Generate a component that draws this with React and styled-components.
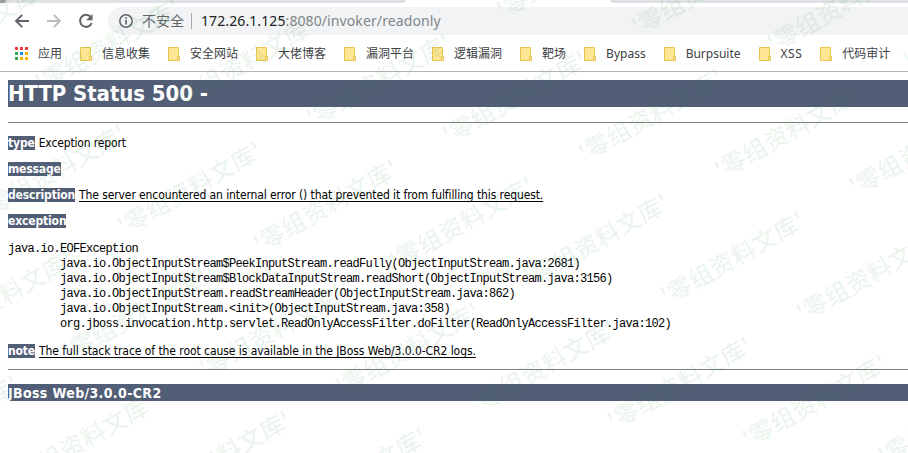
import React from "react";
import styled, { createGlobalStyle, css } from "styled-components";

const uiFont = `"Noto Sans", "Noto Sans CJK SC", sans-serif`;
const pageFont = `"DejaVu Sans Condensed", "DejaVu Sans", "Liberation Sans", sans-serif`;
const slate = "#525d76";

const GlobalStyle = createGlobalStyle`
  * { box-sizing: border-box; }
  body { margin: 0; background: #fff; overflow: hidden; }
`;

const Window = styled.div`
  position: relative;
  display: flex;
  flex-direction: column;
  width: 908px;
  height: 453px;
  overflow: hidden;
  background: #fff;
`;

const TabStrip = styled.div`
  display: flex;
  justify-content: space-between;
  height: 3px;
`;

const TabEdge = styled.div`
  width: ${(p) => p.$width}px;
  background: #dee1e6;
  border-radius: ${(p) => (p.$side === "left" ? "0 0 5px 0" : "0 0 0 5px")};
`;

const TabBadge = styled.div`
  width: 6px;
  height: 3px;
  background: #a09ca3;
  border-radius: 0 0 6px 0;
`;

const Toolbar = styled.div`
  display: flex;
  align-items: center;
  height: 36px;
`;

const NavButtons = styled.div`
  display: flex;
  align-items: center;
  width: 108px;
  padding-left: 14px;
  gap: 16px;
  svg { display: block; }
`;

const AddressBar = styled.div`
  display: flex;
  align-items: center;
  flex: 1;
  height: 28px;
  padding-left: 11px;
  border-radius: 14px 0 0 14px;
  background: #f1f3f4;
  font: 14px/28px ${uiFont};
  color: #5f6368;
  white-space: nowrap;
`;

const Security = styled.span`
  margin-left: 9px;
`;

const Separator = styled.span`
  width: 1px;
  height: 16px;
  margin: 0 9px 0 7px;
  background: #a5a8ac;
`;

const Url = styled.span`
  color: #80868b;
  letter-spacing: 0.1px;
`;

const Host = styled.span`
  color: #202124;
`;

const Bookmarks = styled.div`
  display: flex;
  align-items: center;
  gap: 18px;
  height: 33px;
  padding: 0 0 3px 15px;
  border-bottom: 1px solid #b3b4b3;
`;

const Bookmark = styled.div`
  display: flex;
  align-items: center;
  gap: 10px;
  font: 12px/18px ${uiFont};
  color: #3c4043;
  letter-spacing: ${(p) => p.$spacing || 0}px;
  white-space: nowrap;
  svg { display: block; flex: none; }
`;

const Content = styled.main`
  display: flex;
  flex-direction: column;
  padding: 8px 0 0 8px;
  font: 12px/14px ${pageFont};
  color: #000;
`;

const Title = styled.h1`
  height: 27px;
  margin: 0 0 15px;
  background: ${slate};
  color: #fff;
  font: bold 22px/28px ${pageFont};
  letter-spacing: -0.08px;
`;

const Rule = styled.div`
  height: 1px;
  margin-top: ${(p) => p.$gap || 0}px;
  background: #7f817f;
`;

const Fields = styled.div`
  display: flex;
  flex-direction: column;
  gap: 12px;
  padding-top: 13px;
`;

const Field = styled.div`
  display: flex;
  gap: 4px;
  height: 14px;
  white-space: nowrap;
`;

const Label = styled.b`
  background: ${slate};
  color: #fff;
  letter-spacing: -0.14px;
`;

const Value = styled.span`
  letter-spacing: ${(p) => p.$spacing || 0}px;
  ${(p) =>
    p.$underlined &&
    css`
      text-decoration: underline;
      text-underline-offset: 2px;
      text-decoration-skip-ink: none;
      text-decoration-thickness: 1px;
    `}
`;

const Trace = styled.pre`
  margin: 14px 0 12px;
  font: 12px/15px "Liberation Mono", monospace;
  letter-spacing: -0.7px;
  tab-size: 8;
`;

const Footer = styled.h3`
  height: 17px;
  margin: 14px 0 0;
  background: ${slate};
  color: #fff;
  font: bold 14px/18px ${pageFont};
  letter-spacing: 0.36px;
`;

const WatermarkLayer = styled.div`
  position: absolute;
  inset: 0;
  pointer-events: none;
  overflow: hidden;
`;

const Watermark = styled.span`
  position: absolute;
  transform: translate(0, -50%) rotate(-29.5deg);
  transform-origin: 0 50%;
  font: 500 24px/24px "Noto Sans CJK SC", sans-serif;
  letter-spacing: 0.4px;
  color: rgba(50, 145, 70, 0.1);
  white-space: nowrap;
`;

const BackIcon = () => (
  <svg width="16" height="16" viewBox="0 0 16 16" fill="none" stroke="#5f6368" strokeWidth="1.9">
    <path d="M15 8H2.200M8.200 1.800L2 8l6.200 6.200" />
  </svg>
);

const ForwardIcon = () => (
  <svg width="16" height="16" viewBox="0 0 16 16" fill="none" stroke="#babcbe" strokeWidth="1.9">
    <path d="M1 8h12.800M7.800 1.800L14 8l-6.200 6.200" />
  </svg>
);

const ReloadIcon = () => (
  <svg width="16" height="16" viewBox="0 0 16 16" fill="none" stroke="#5f6368" strokeWidth="2">
    <path d="M12.700 4A6 6 0 1 0 13.700 10" />
    <path d="M14.500 1v6.300H8.200z" fill="#5f6368" stroke="none" />
  </svg>
);

const InfoIcon = () => (
  <svg width="14" height="14" viewBox="0 0 14 14">
    <circle cx="7" cy="7" r="6.200" fill="none" stroke="#5f6368" strokeWidth="1.500" />
    <path d="M6.200 6h1.600v4.500H6.200zM6.200 3.300h1.600v1.600H6.200z" fill="#5f6368" />
  </svg>
);

const appColors = ["#f03a3a", "#f03a3a", "#f03a3a", "#34a853", "#1a88f0", "#fbb300", "#34a853", "#fbb300", "#fbb300"];

const AppsIcon = () => (
  <svg width="13" height="13" viewBox="0 0 13 13">
    {appColors.map((c, i) => (
      <rect key={i} x={(i % 3) * 5} y={Math.floor(i / 3) * 5} width="3" height="3" fill={c} />
    ))}
  </svg>
);

const FolderIcon = () => (
  <svg width="12" height="14" viewBox="0 0 12 14">
    <path d="M.5.5h10v9h1v4H.5z" fill="#ffe694" stroke="#e8c64c" />
    <path d="M9.500 13V9.500h2" fill="none" stroke="#e8c64c" />
  </svg>
);

const bookmarks = [
  { name: "信息收集" },
  { name: "安全网站" },
  { name: "大佬博客" },
  { name: "漏洞平台" },
  { name: "逻辑漏洞" },
  { name: "靶场" },
  { name: "Bypass" },
  { name: "Burpsuite" },
  { name: "XSS", spacing: 0.5 },
  { name: "代码审计" },
];

const trace = `java.io.EOFException
\tjava.io.ObjectInputStream$PeekInputStream.readFully(ObjectInputStream.java:2681)
\tjava.io.ObjectInputStream$BlockDataInputStream.readShort(ObjectInputStream.java:3156)
\tjava.io.ObjectInputStream.readStreamHeader(ObjectInputStream.java:862)
\tjava.io.ObjectInputStream.<init>(ObjectInputStream.java:358)
\torg.jboss.invocation.http.servlet.ReadOnlyAccessFilter.doFilter(ReadOnlyAccessFilter.java:102)`;

const marks = [];
for (let row = -1; row < 5; row++) {
  for (let col = -6; col < 7; col++) {
    const left = 497.5 + col * 135.8 - row * 53.5;
    const top = 10.5 + col * 17.3 + row * 125.7;
    if (left > -140 && left < 905 && top > -10 && top < 525) marks.push({ left, top });
  }
}

export default function App() {
  return (
    <Window>
      <GlobalStyle />
      <TabStrip>
        <TabEdge $width={406} $side="left">
          <TabBadge />
        </TabEdge>
        <TabEdge $width={298} $side="right" />
      </TabStrip>
      <Toolbar>
        <NavButtons>
          <BackIcon />
          <ForwardIcon />
          <ReloadIcon />
        </NavButtons>
        <AddressBar>
          <InfoIcon />
          <Security>不安全</Security>
          <Separator />
          <Url>
            <Host>172.26.1.125</Host>:8080/invoker/readonly
          </Url>
        </AddressBar>
      </Toolbar>
      <Bookmarks>
        <Bookmark>
          <AppsIcon />
          应用
        </Bookmark>
        {bookmarks.map(({ name, spacing }) => (
          <Bookmark key={name} $spacing={spacing}>
            <FolderIcon />
            {name}
          </Bookmark>
        ))}
      </Bookmarks>
      <Content>
        <Title>HTTP Status 500 -</Title>
        <Rule />
        <Fields>
          <Field>
            <Label>type</Label>
            <Value $spacing={-0.15}>Exception report</Value>
          </Field>
          <Field>
            <Label>message</Label>
          </Field>
          <Field>
            <Label>description</Label>
            <Value $underlined $spacing={-0.1}>
              The server encountered an internal error () that prevented it from fulfilling this request.
            </Value>
          </Field>
          <Field>
            <Label>exception</Label>
          </Field>
        </Fields>
        <Trace>{trace}</Trace>
        <Field>
          <Label>note</Label>
          <Value $underlined $spacing={-0.06}>
            The full stack trace of the root cause is available in the JBoss Web/3.0.0-CR2 logs.
          </Value>
        </Field>
        <Rule $gap={11} />
        <Footer>JBoss Web/3.0.0-CR2</Footer>
      </Content>
      <WatermarkLayer>
        {marks.map((m, i) => (
          <Watermark key={i} style={{ left: m.left, top: m.top }}>
            '零组资料文库'
          </Watermark>
        ))}
      </WatermarkLayer>
    </Window>
  );
}
